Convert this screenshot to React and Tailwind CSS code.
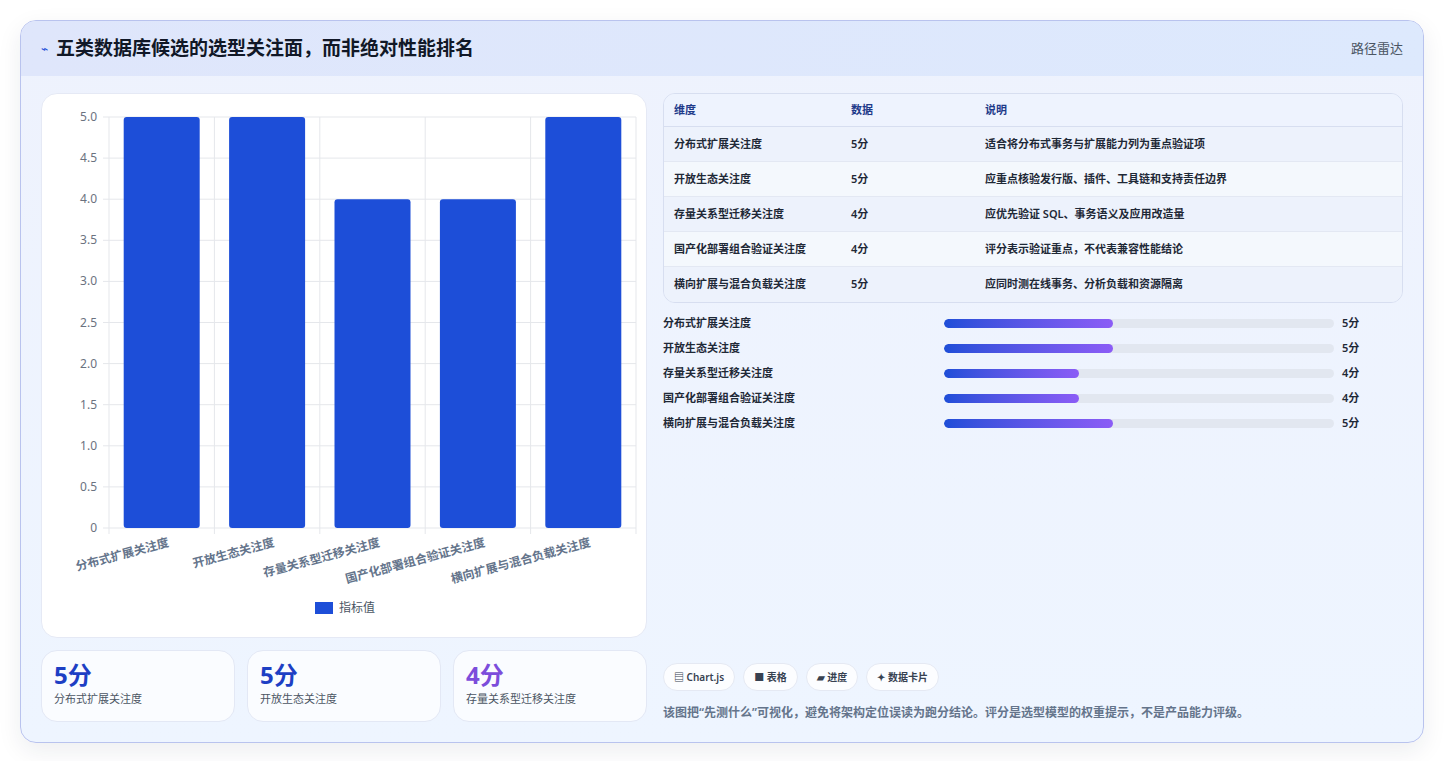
const rows = [
  { name: "分布式扩展关注度", v: 5, note: "适合将分布式事务与扩展能力列为重点验证项" },
  { name: "开放生态关注度", v: 5, note: "应重点核验发行版、插件、工具链和支持责任边界" },
  { name: "存量关系型迁移关注度", v: 4, note: "应优先验证 SQL、事务语义及应用改造量" },
  { name: "国产化部署组合验证关注度", v: 4, note: "评分表示验证重点，不代表兼容性能结论" },
  { name: "横向扩展与混合负载关注度", v: 5, note: "应同时测在线事务、分析负载和资源隔离" },
];

const font = { fontFamily: '"Noto Sans", "Noto Sans CJK SC", sans-serif' };

function Chart() {
  // plot area in card coords (card origin at 40,93)
  const x0 = 67, x1 = 594, yTop = 23, yBot = 434;
  const h = yBot - yTop;
  const slot = (x1 - x0) / 5;
  const ticks = [0, 0.5, 1, 1.5, 2, 2.5, 3, 3.5, 4, 4.5, 5];
  return (
    <svg width="606" height="543" className="block">
      {ticks.map((t) => {
        const y = yBot - (t / 5) * h;
        return (
          <g key={t}>
            <line x1={x0 - 6} x2={x1} y1={y} y2={y} stroke="#e5e7eb" />
            <text x={x0 - 12} y={y + 4} textAnchor="end" fontSize="12" fill="#6b7280">{t === 0 ? "0" : t.toFixed(1)}</text>
          </g>
        );
      })}
      {[0, 1, 2, 3, 4, 5].map((i) => (
        <line key={i} x1={x0 + i * slot} x2={x0 + i * slot} y1={yTop} y2={yBot + 6} stroke="#e5e7eb" />
      ))}
      {rows.map((r, i) => {
        const bh = (r.v / 5) * h;
        const cx = x0 + slot * i + slot / 2;
        return (
          <g key={r.name}>
            <rect x={cx - 38} y={yBot - bh} width="76" height={bh} rx="3" fill="#1d4ed8" />
            <text x={cx + 8} y={yBot + 18} textAnchor="end" fontSize="12" fontWeight="600" fill="#64748b" transform={`rotate(-15 ${cx + 8} ${yBot + 18})`}>{r.name}</text>
          </g>
        );
      })}
      <rect x="273" y="508" width="18" height="12" fill="#1d4ed8" />
      <text x="297" y="518" fontSize="12" fill="#4b5563">指标值</text>
    </svg>
  );
}

export default function App() {
  return (
    <div className="min-h-screen bg-white p-5" style={font}>
      <div className="rounded-2xl border border-[#b9c3ee] bg-gradient-to-b from-[#eef2fd] to-[#eef5ff] shadow-[0_8px_24px_rgba(30,41,59,0.08)] overflow-hidden">
        <div className="h-[55px] flex items-center justify-between px-5 bg-gradient-to-r from-[#dfe6fb] to-[#dde9fd]">
          <div className="flex items-center gap-2">
            <span className="text-[#1d4ed8] text-xs">⌁</span>
            <h1 className="text-[19px] font-bold text-[#111827]">五类数据库候选的选型关注面，而非绝对性能排名</h1>
          </div>
          <span className="text-[13px] text-[#4b5563]">路径雷达</span>
        </div>
        <div className="flex gap-4 p-5 pt-[17px]">
          <div className="w-[606px] flex flex-col gap-3">
            <div className="rounded-2xl bg-white border border-[#e5e9f5]">
              <Chart />
            </div>
            <div className="grid grid-cols-3 gap-3">
              {rows.slice(0, 3).map((r, i) => (
                <div key={r.name} className="h-[72px] rounded-2xl bg-white/70 border border-[#e3e8f5] px-3 pt-2">
                  <div className={`text-[24px] font-bold leading-8 ${i === 2 ? "text-[#7c4ddb]" : "text-[#1d3fc4]"}`}>{r.v}分</div>
                  <div className="text-[11px] text-[#4b5563]">{r.name}</div>
                </div>
              ))}
            </div>
          </div>
          <div className="flex-1 flex flex-col">
            <div className="rounded-xl border border-[#d7def0] overflow-hidden text-[11px] font-semibold">
              <div className="flex h-[33px] items-center px-[10px] bg-[#eef3fe] text-[#1e3a8a] border-b border-[#d7def0]">
                <span className="w-[177px]">维度</span><span className="w-[134px]">数据</span><span>说明</span>
              </div>
              {rows.map((r, i) => (
                <div key={r.name} className={`flex h-[35px] items-center px-[10px] text-[#1f2937] ${i < 4 ? "border-b border-[#e3e8f3]" : ""} ${i % 2 ? "bg-[#f4f8fd]" : "bg-[#edf2fc]"}`}>
                  <span className="w-[177px]">{r.name}</span><span className="w-[134px]">{r.v}分</span><span>{r.note}</span>
                </div>
              ))}
            </div>
            <div className="flex flex-col gap-[9px] mt-[12px]">
              {rows.map((r) => (
                <div key={r.name} className="flex items-center h-4 text-[11px] font-semibold text-[#1f2937]">
                  <span className="w-[281px]">{r.name}</span>
                  <div className="w-[390px] h-[9px] rounded-full bg-[#e2e7f0] overflow-hidden">
                    <div className={`h-full rounded-full bg-gradient-to-r from-[#1d4ed8] to-[#8b5cf6] ${r.v === 5 ? "w-[169px]" : "w-[135px]"}`} />
                  </div>
                  <span className="ml-2">{r.v}分</span>
                </div>
              ))}
            </div>
            <div className="flex-1" />
            <div className="flex gap-2 text-[10px] font-semibold text-[#374151]">
              {["▤ Chart.js", "■ 表格", "▰ 进度", "✦ 数据卡片"].map((c) => (
                <span key={c} className="h-[28px] flex items-center px-[10px] rounded-full bg-white/80 border border-[#e5e9f3]">{c}</span>
              ))}
            </div>
            <p className="mt-[13px] text-[12px] font-semibold text-[#64748b]">该图把“先测什么”可视化，避免将架构定位误读为跑分结论。评分是选型模型的权重提示，不是产品能力评级。</p>
          </div>
        </div>
      </div>
    </div>
  );
}
